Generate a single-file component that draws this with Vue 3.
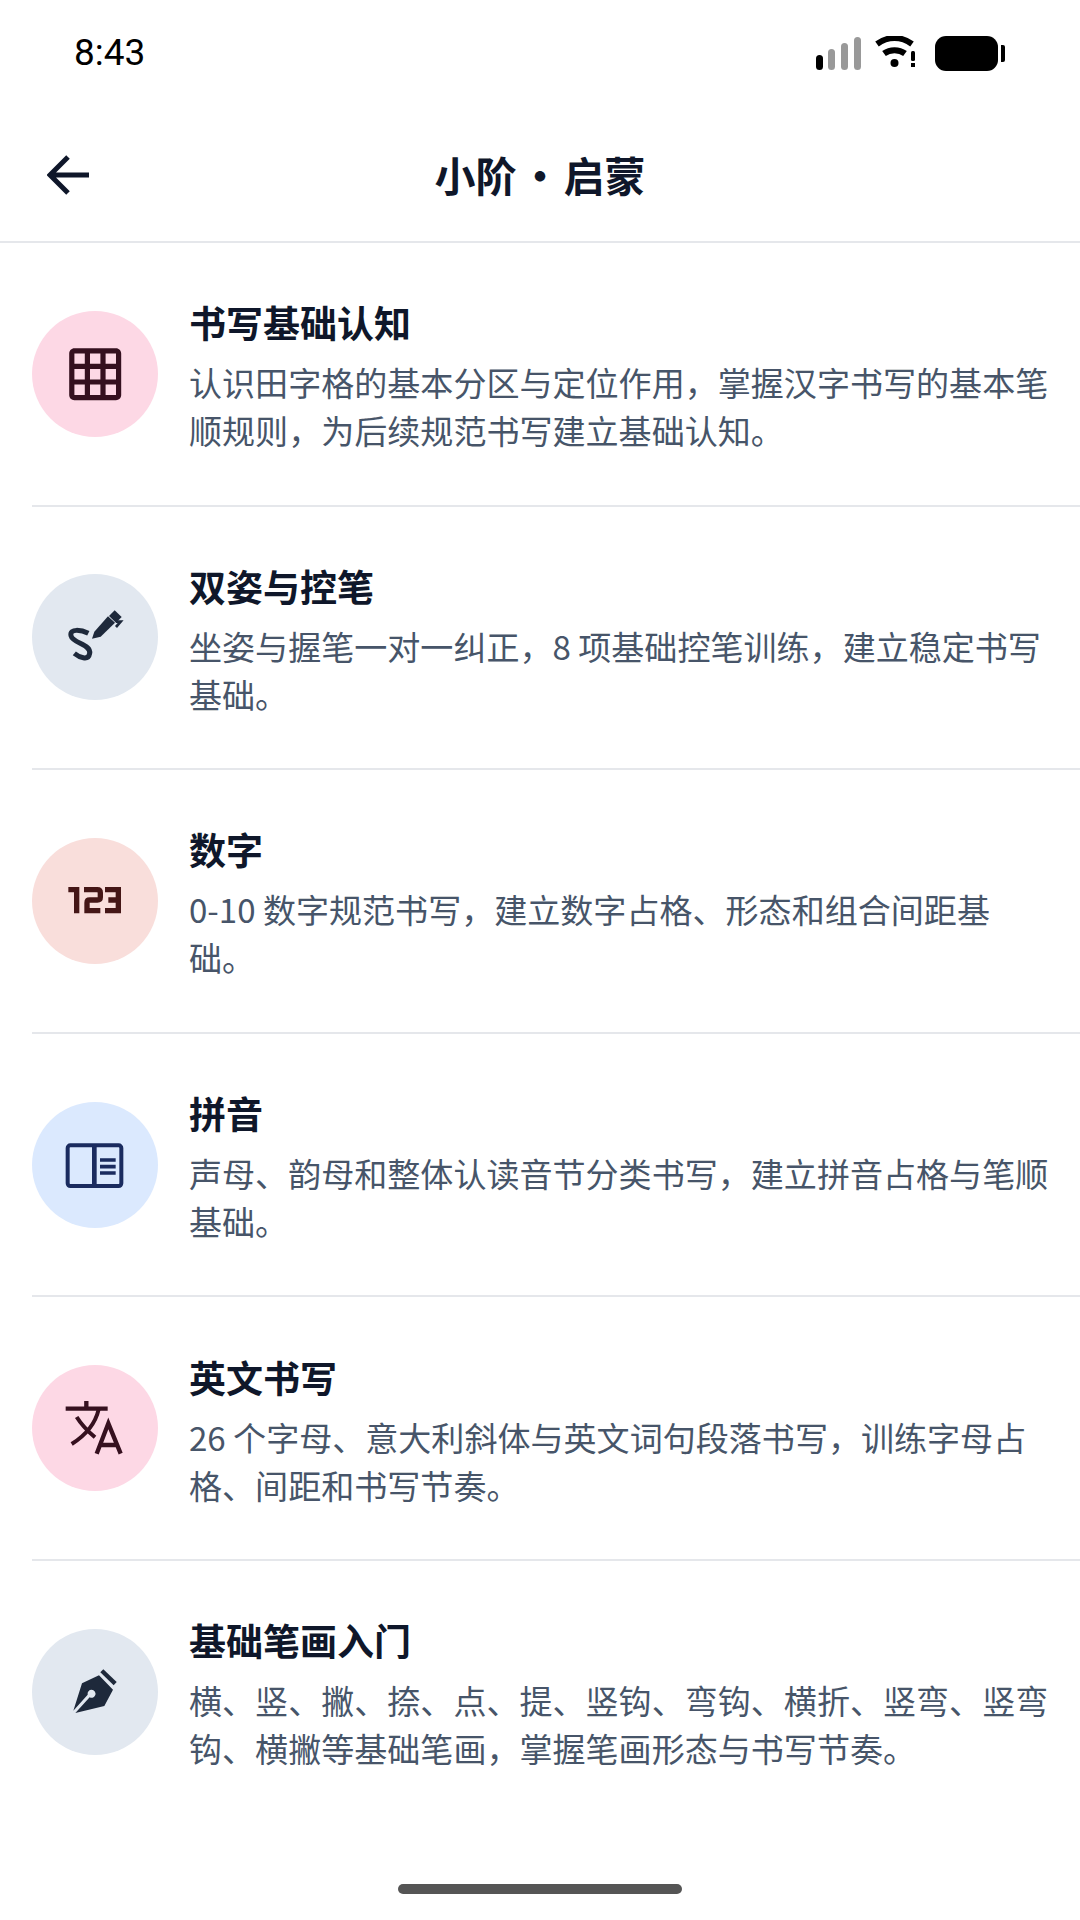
<script setup>
const items = [
  { id: 'grid', bg: '#fdd8e5', title: '书写基础认知', desc: '认识田字格的基本分区与定位作用，掌握汉字书写的基本笔顺规则，为后续规范书写建立基础认知。' },
  { id: 'sign', bg: '#e2e8f0', title: '双姿与控笔', desc: '坐姿与握笔一对一纠正，8 项基础控笔训练，建立稳定书写基础。' },
  { id: 'num', bg: '#f9dedb', title: '数字', desc: '0-10 数字规范书写，建立数字占格、形态和组合间距基础。' },
  { id: 'book', bg: '#dbe9fe', title: '拼音', desc: '声母、韵母和整体认读音节分类书写，建立拼音占格与笔顺基础。' },
  { id: 'trans', bg: '#fdd8e5', title: '英文书写', desc: '26 个字母、意大利斜体与英文词句段落书写，训练字母占格、间距和书写节奏。' },
  { id: 'nib', bg: '#e2e8f0', title: '基础笔画入门', desc: '横、竖、撇、捺、点、提、竖钩、弯钩、横折、竖弯、竖弯钩、横撇等基础笔画，掌握笔画形态与书写节奏。' }
]
</script>

<template>
  <div class="page">
    <div class="status">
      <span class="time">8:43</span>
      <svg class="status-icons" width="192" height="36" viewBox="0 0 192 36">
        <rect x="2" y="19" width="7" height="15" rx="3.5" fill="#000" />
        <rect x="14" y="13" width="7" height="21" rx="3.5" fill="#999" />
        <rect x="27" y="7" width="7" height="27" rx="3.5" fill="#999" />
        <rect x="40" y="1" width="7" height="33" rx="3.5" fill="#999" />
        <path d="M63 8C74 0 87 0 98 8M70 17.500C76 13 85 13 91 17.500" fill="none" stroke="#000" stroke-width="6" />
        <circle cx="80.500" cy="27" r="4" fill="#000" />
        <rect x="97" y="15" width="4" height="10" rx="1.500" fill="#000" />
        <rect x="97" y="27" width="4" height="4" fill="#000" />
        <rect x="121" y="0" width="63" height="35" rx="11" fill="#000" />
        <path d="M187 9h2a2 2 0 0 1 2 2v13a2 2 0 0 1-2 2h-2z" fill="#000" />
      </svg>
    </div>

    <header class="bar">
      <svg class="back" width="42" height="40" viewBox="0 0 42 40">
        <path d="M42 20H4M21 2 3 20l18 18" fill="none" stroke="#0f172a" stroke-width="5" />
      </svg>
      <h1 class="heading">小阶<span class="dot">•</span>启蒙</h1>
    </header>

    <ul class="list">
      <li v-for="item in items" :key="item.id" class="row">
        <div class="circle" :style="{ background: item.bg }">
          <svg v-if="item.id === 'grid'" width="62.400" height="62.400" viewBox="0 0 24 24">
            <path fill="#35101f" d="M20 2H4c-1.100 0-2 .9-2 2v16c0 1.100.9 2 2 2h16c1.100 0 2-.9 2-2V4c0-1.100-.9-2-2-2zM8 20H4v-4h4v4zm0-6H4v-4h4v4zm0-6H4V4h4v4zm6 12h-4v-4h4v4zm0-6h-4v-4h4v4zm0-6h-4V4h4v4zm6 12h-4v-4h4v4zm0-6h-4v-4h4v4zm0-6h-4V4h4v4z" />
          </svg>
          <svg v-else-if="item.id === 'sign'" width="126" height="126" viewBox="36 30 378 378">
            <path d="M205 208C185 198 148 192 153 215C158 238 214 240 209 268C205 292 178 280 163 268" fill="none" stroke="#1e293b" stroke-width="15" />
            <path d="M216 224 223 203 264 157 285 176 242 218Z" fill="#1e293b" />
            <path d="M267 156 284 139 305 159 288 176Z" fill="#1e293b" />
            <path d="M288 189 302 173 288 173" fill="none" stroke="#1e293b" stroke-width="8" />
          </svg>
          <svg v-else-if="item.id === 'num'" width="126" height="126" viewBox="36 40 378 378">
            <path d="M145 195H170V266M192 195H232Q241 195 241 204V218Q241 226 232 226H209Q201 226 201 234V258H241M255 195H295V258H255M265 226H295" fill="none" stroke="#451616" stroke-width="16" />
          </svg>
          <svg v-else-if="item.id === 'book'" width="126" height="126" viewBox="36 36 378 378">
            <rect x="143" y="166" width="161" height="122" rx="8" fill="none" stroke="#1a2b5f" stroke-width="12" />
            <path d="M223 166V288" stroke="#1a2b5f" stroke-width="14" />
            <path d="M240 210H287M240 230H287M240 249H287" stroke="#1a2b5f" stroke-width="11" />
          </svg>
          <svg v-else-if="item.id === 'trans'" width="126" height="126" viewBox="36 30 378 378">
            <path d="M137 161H263M199 138V158" fill="none" stroke="#36101f" stroke-width="13" />
            <path d="M236 163C225 210 190 245 155 267M170 186C185 210 205 230 225 247" fill="none" stroke="#36101f" stroke-width="12" />
            <path d="M230 296 265 205 302 296M243 270H289" fill="none" stroke="#36101f" stroke-width="13" />
          </svg>
          <svg v-else width="126" height="126" viewBox="36 27 378 378">
            <path d="M186 190 237 166 279 209 253 258 166 279 209 232A12 12 0 1 0 203 224L160 272Z" fill="#1e293b" />
            <path d="M241 157 250 148 290 186 281 196Z" fill="#1e293b" />
          </svg>
        </div>
        <div class="body">
          <h2 class="title">{{ item.title }}</h2>
          <p class="desc">{{ item.desc }}</p>
        </div>
      </li>
    </ul>

    <div class="home-wrap"><div class="home"></div></div>
  </div>
</template>

<style scoped>
.page {
  width: 1080px;
  height: 1920px;
  display: flex;
  flex-direction: column;
  background: #fff;
  font-family: "Noto Sans CJK SC", "Noto Sans", sans-serif;
  overflow: hidden;
}
.status {
  height: 104px;
  box-sizing: border-box;
  padding: 37px 74px 0 74px;
  display: flex;
  justify-content: space-between;
  align-items: flex-start;
}
.time {
  font-family: Roboto, sans-serif;
  font-size: 37px;
  line-height: 32px;
  color: #000;
}
.status-icons { display: block; margin-top: -1px; }
.bar {
  height: 139px;
  box-sizing: border-box;
  border-bottom: 2px solid #e5e7eb;
  padding-left: 47px;
  display: flex;
  align-items: center;
  position: relative;
}
.back { display: block; margin-top: 5px; }
.heading {
  position: absolute;
  left: 0;
  right: 0;
  top: 45px;
  margin: 0;
  text-align: center;
  font-size: 41px;
  line-height: 50px;
  font-weight: 700;
  color: #0f172a;
}
.dot { margin: 0 3px; }
.list {
  list-style: none;
  margin: 0;
  padding: 0 0 0 32px;
}
.row {
  height: 263.600px;
  box-sizing: border-box;
  display: flex;
  align-items: center;
  gap: 31px;
  border-bottom: 2px solid #e5e7eb;
}
.row:last-child { border-bottom-color: transparent; }
.circle {
  width: 126px;
  height: 126px;
  border-radius: 50%;
  flex: none;
  display: flex;
  align-items: center;
  justify-content: center;
}
.circle svg { display: block; }
.body {
  flex: 1;
  min-width: 0;
  padding: 2px 26px 0 0;
}
.title {
  margin: 0 0 9px;
  font-size: 37px;
  line-height: 54px;
  font-weight: 700;
  color: #0f172a;
}
.desc {
  margin: 0;
  font-size: 33.050px;
  line-height: 48px;
  color: #475569;
}
.home-wrap {
  flex: 1;
  display: flex;
  align-items: flex-end;
  justify-content: center;
  padding-bottom: 26px;
}
.home {
  width: 284px;
  height: 10px;
  border-radius: 5px;
  background: #555;
}
</style>
